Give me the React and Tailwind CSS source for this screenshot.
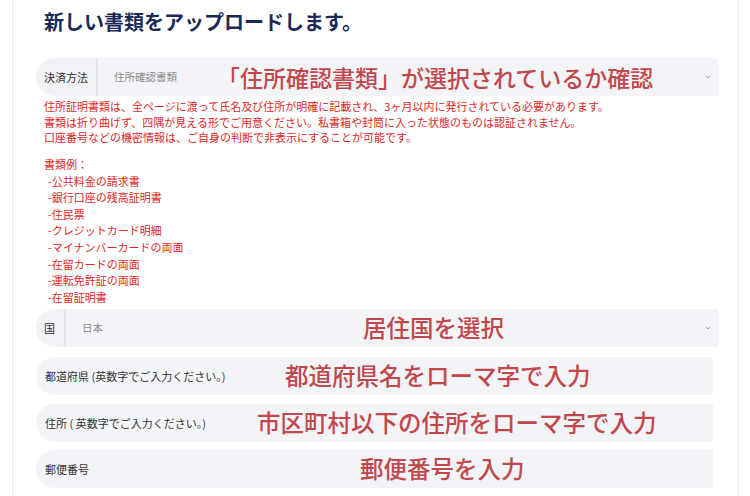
import React from "react";

const font = { fontFamily: '"Noto Sans CJK JP", "Noto Sans", sans-serif' };

function Chevron() {
  return (
    <svg width="6" height="4" viewBox="0 0 6 4" className="shrink-0">
      <path d="M0.8 0.8 L3 3 L5.2 0.8" fill="none" stroke="#a3a7ae" strokeWidth="1" />
    </svg>
  );
}

function Annot({ children, left, size = "text-[23.5px]" }) {
  return (
    <span
      className={
        "absolute top-1/2 -translate-y-1/2 whitespace-nowrap font-medium leading-none text-[#c2474b] " + size
      }
      style={{ left }}
    >
      {children}
    </span>
  );
}

function SelectRow({ label, labelW, value, annot, annotLeft, annotSize, className = "" }) {
  return (
    <div className={"relative flex h-[38px] w-[682px] items-stretch " + className}>
      <div
        className="flex items-center rounded-l-full bg-[#f1f2f5] pl-2 text-[11px] text-[#333]"
        style={{ width: labelW }}
      >
        {label}
      </div>
      <div className="w-[2px] bg-[#e4e5e8]" />
      <div className="flex flex-1 items-center justify-between bg-[#f3f4f7] pl-4 pr-[7px] text-[10.5px] text-[#8a8a8a]">
        <span>{value}</span>
        <Chevron />
      </div>
      <Annot left={annotLeft} size={annotSize}>
        {annot}
      </Annot>
    </div>
  );
}

function InputRow({ label, annot, annotLeft, className = "" }) {
  return (
    <div
      className={
        "relative flex h-[38px] w-[677px] items-center rounded-l-full bg-[#f3f4f7] pl-[9px] text-[11px] text-[#333] " +
        className
      }
    >
      {label}
      <Annot left={annotLeft}>{annot}</Annot>
    </div>
  );
}

export default function App() {
  const items = [
    "-公共料金の請求書",
    "-銀行口座の残高証明書",
    "-住民票",
    "-クレジットカード明細",
    "-マイナンバーカードの両面",
    "-在留カードの両面",
    "-運転免許証の両面",
    "-在留証明書",
  ];
  return (
    <div className="h-[496px] w-[750px] overflow-hidden bg-white" style={font}>
      <div className="ml-[12px] h-full w-[727px] border-x border-[#ececee] bg-white pl-[23px]">
        <h1 className="pl-[8px] pt-[9px] text-[20px] font-bold leading-[26px] text-[#1a2a58]">
          新しい書類をアップロードします。
        </h1>
        <SelectRow
          className="mt-[23px]"
          label="決済方法"
          labelW="60px"
          value="住所確認書類"
          annot="「住所確認書類」が選択されているか確認"
          annotLeft="181px"
          annotSize="text-[23px]"
        />
        <div className="pl-[8px] pt-[3px] text-[11px] leading-[15.7px] text-[#e0281f]">
          <p>住所証明書類は、全ページに渡って氏名及び住所が明確に記載され、3ヶ月以内に発行されている必要があります。</p>
          <p>書類は折り曲げず、四隅が見える形でご用意ください。私書箱や封筒に入った状態のものは認証されません。</p>
          <p>口座番号などの機密情報は、ご自身の判断で非表示にすることが可能です。</p>
          <p className="mt-[10px] leading-[16.5px]">書類例：</p>
          {items.map((t) => (
            <p key={t} className="pl-[4px] leading-[16.6px]">
              {t}
            </p>
          ))}
        </div>
        <SelectRow
          className="mt-[4px]"
          label="国"
          labelW="28px"
          value="日本"
          annot="居住国を選択"
          annotLeft="327px"
        />
        <InputRow
          className="mt-[10px]"
          label="都道府県 (英数字でご入力ください。)"
          annot="都道府県名をローマ字で入力"
          annotLeft="249px"
        />
        <InputRow
          className="mt-[9px]"
          label="住所 ( 英数字でご入力ください。)"
          annot="市区町村以下の住所をローマ字で入力"
          annotLeft="221px"
        />
        <InputRow
          className="mt-[8px]"
          label="郵便番号"
          annot="郵便番号を入力"
          annotLeft="324px"
        />
      </div>
    </div>
  );
}
